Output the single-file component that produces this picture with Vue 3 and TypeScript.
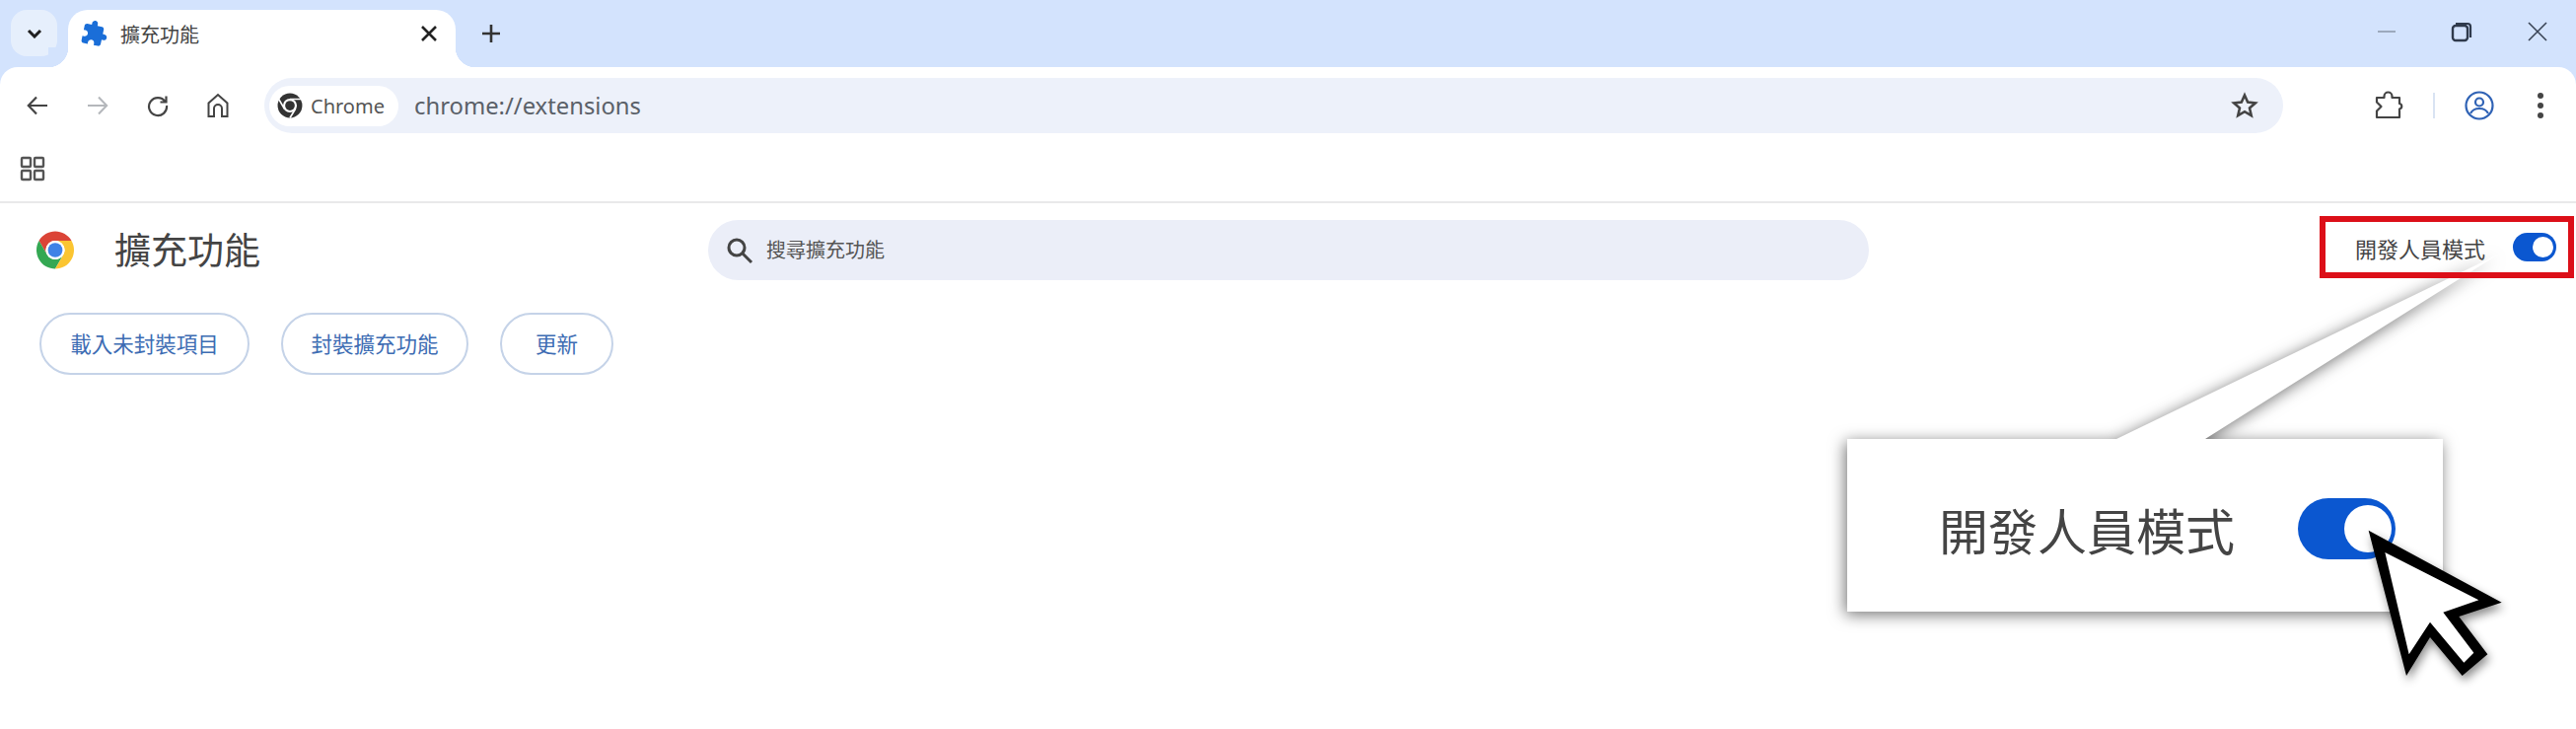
<template>
  <div class="page">
    <!-- browser chrome -->
    <div class="tabstrip">
      <div class="tab-list">
        <svg width="16" height="10" viewBox="0 0 16 10"><path d="M2 2l6 6 6-6" fill="none" stroke="#1f1f1f" stroke-width="3" /></svg>
      </div>
      <div class="tab">
        <svg class="favicon" width="28" height="28" viewBox="0 0 24 24">
          <path :d="puzzle" fill="#1a6ed8" transform="rotate(12 12 12)" />
        </svg>
        <span class="tab-title">擴充功能</span>
        <svg class="tab-close" width="18" height="18" viewBox="0 0 18 18"><path d="M2 2l14 14M16 2L2 16" stroke="#222" stroke-width="2.6" /></svg>
      </div>
      <svg class="tab-new" width="22" height="22" viewBox="0 0 22 22"><path d="M11 2v18M2 11h18" stroke="#333" stroke-width="2.6" /></svg>
      <div class="window-controls">
        <svg width="20" height="20" viewBox="0 0 20 20"><path d="M1 10h18" stroke="#8f9bad" stroke-width="1.6" /></svg>
        <svg width="22" height="22" viewBox="0 0 22 22">
          <rect x="2" y="5" width="15" height="15" rx="3" fill="none" stroke="#2f3a4c" stroke-width="2.4" />
          <path d="M5 3h12a3 3 0 0 1 3 3v11" fill="none" stroke="#2f3a4c" stroke-width="2.2" />
        </svg>
        <svg width="22" height="22" viewBox="0 0 22 22"><path d="M2 2l18 18M20 2L2 20" stroke="#3a4456" stroke-width="1.6" /></svg>
      </div>
    </div>

    <div class="chrome-body">
      <div class="toolbar">
        <div class="nav-icons">
          <svg width="24" height="24" viewBox="0 0 24 24"><path d="M22 12H3M11 3.500L2.800 12l8.200 8.500" fill="none" stroke="#444" stroke-width="2.200" /></svg>
          <svg width="24" height="24" viewBox="0 0 24 24"><path d="M2 12h19M13 3.500l8.200 8.500-8.200 8.500" fill="none" stroke="#b4b7bb" stroke-width="2" /></svg>
          <svg width="24" height="24" viewBox="0 0 24 24"><path d="M19.500 8A9 9 0 1 0 21 12M20.500 2.500V8.500H14.500" fill="none" stroke="#444" stroke-width="2.200" /></svg>
          <svg width="24" height="26" viewBox="0 0 24 26"><path d="M2.500 24V10.500L12 2l9.500 8.500V24h-5.500v-8a4 4 0 0 0-8 0v8z" fill="none" stroke="#444" stroke-width="2" /></svg>
        </div>
        <div class="omnibox">
          <div class="chip">
            <svg width="26" height="26" viewBox="0 0 48 48">
              <circle cx="24" cy="24" r="23" fill="#333" />
              <circle cx="24" cy="24" r="13" fill="#fff" />
              <circle cx="24" cy="24" r="9" fill="#333" />
              <path d="M24 12h21M13.600 30L3 11.800M34.400 30L24 47" stroke="#fff" stroke-width="3" />
            </svg>
            <span class="chip-text">Chrome</span>
          </div>
          <span class="url">chrome://extensions</span>
          <svg class="star" width="28" height="28" viewBox="0 0 24 24">
            <path d="M12 3l2.700 6.100 6.600.7-5 4.400 1.500 6.500L12 17.300l-5.800 3.400 1.500-6.500-5-4.400 6.600-.7z" fill="none" stroke="#444" stroke-width="2.200" stroke-linejoin="miter" />
          </svg>
        </div>
        <div class="tool-icons">
          <svg class="tool-puzzle" width="30" height="30" viewBox="0 0 30 30">
            <path d="M2 7H9.500V5.500a4 4 0 0 1 8 0V7H25V13a2.800 2.800 0 0 1 0 5.500V27H2V20.500L6.500 16 2 11.500z" fill="none" stroke="#444" stroke-width="2.200" stroke-linejoin="round" />
          </svg>
          <span class="tool-sep"></span>
          <svg class="tool-profile" width="30" height="30" viewBox="0 0 30 30">
            <circle cx="15" cy="15" r="13.500" fill="none" stroke="#2f62b5" stroke-width="2.200" />
            <circle cx="15" cy="11.500" r="4" fill="none" stroke="#2f62b5" stroke-width="2.200" />
            <path d="M6 23c2-4 5-5 9-5s7 1 9 5" fill="none" stroke="#2f62b5" stroke-width="2.200" />
          </svg>
          <svg class="tool-menu" width="8" height="28" viewBox="0 0 8 28">
            <circle cx="4" cy="4" r="3" fill="#444" /><circle cx="4" cy="14" r="3" fill="#444" /><circle cx="4" cy="24" r="3" fill="#444" />
          </svg>
        </div>
      </div>

      <div class="bookmarks">
        <svg width="26" height="26" viewBox="0 0 26 26">
          <g fill="none" stroke="#555" stroke-width="2.400">
            <rect x="2" y="2" width="9" height="9" rx="1" /><rect x="15" y="2" width="9" height="9" rx="1" />
            <rect x="2" y="15" width="9" height="9" rx="1" /><rect x="15" y="15" width="9" height="9" rx="1" />
          </g>
        </svg>
      </div>
    </div>

    <!-- extensions page -->
    <div class="ext-header">
      <svg class="logo" width="38" height="39" viewBox="2 2 44 44">
        <path d="M4.950 13A22 22 0 0 1 43.050 13H24A11 11 0 0 0 14.470 29.500z" fill="#db4437" />
        <path d="M4.950 13A22 22 0 0 0 24 46L33.530 29.500A11 11 0 0 1 14.470 29.500z" fill="#34a853" />
        <path d="M43.050 13A22 22 0 0 1 24 46L33.530 29.500A11 11 0 0 0 24 13z" fill="#fbc531" />
        <circle cx="24" cy="24" r="11" fill="#fff" />
        <circle cx="24" cy="24" r="8.500" fill="#3f82e6" />
      </svg>
      <h1 class="title">擴充功能</h1>
      <div class="search">
        <svg width="28" height="28" viewBox="0 0 28 28"><circle cx="11" cy="11" r="8" fill="none" stroke="#444" stroke-width="3" /><path d="M17 17l9 9" stroke="#444" stroke-width="3" /></svg>
        <span class="search-text">搜尋擴充功能</span>
      </div>
      <div class="dev-mode">
        <span class="dev-label">開發人員模式</span>
        <span class="toggle"><span class="knob"></span></span>
      </div>
    </div>

    <div class="actions">
      <button v-for="b in actions" :key="b.label" class="action-btn" :style="{ width: b.width + 'px' }">{{ b.label }}</button>
    </div>

    <!-- zoomed callout -->
    <svg class="callout-bg" width="2612" height="739" viewBox="0 0 2612 739">
      <polygon points="1873,445 2146,445 2533,258 2236,445 2477,445 2477,620 1873,620" fill="#fff" />
    </svg>
    <div class="callout">
      <span class="callout-label">開發人員模式</span>
      <span class="toggle toggle-big"><span class="knob knob-big"></span></span>
    </div>
    <svg class="cursor" width="240" height="210" viewBox="0 0 720 630">
      <polygon points="245,143 650,362 520,405 607,520 530,585 432,468 360,585" fill="#000" />
      <polygon points="295,210 580,355 472,392 565,515 535,545 432,422 368,520" fill="#fff" />
    </svg>
  </div>
</template>

<script setup lang="ts">
const puzzle =
  "M20.500 11H19V7c0-1.100-.9-2-2-2h-4V3.500C13 2.120 11.880 1 10.500 1S8 2.120 8 3.500V5H4c-1.100 0-1.990.9-1.990 2v3.800H3.500c1.490 0 2.700 1.210 2.700 2.700s-1.210 2.700-2.700 2.700H2V20c0 1.100.9 2 2 2h3.800v-1.500c0-1.490 1.210-2.700 2.700-2.700 1.490 0 2.700 1.210 2.700 2.700V22H17c1.100 0 2-.9 2-2v-4h1.500c1.380 0 2.500-1.120 2.500-2.500S21.880 11 20.500 11z";

const actions = [
  { label: "載入未封裝項目", width: 213 },
  { label: "封裝擴充功能", width: 190 },
  { label: "更新", width: 115 },
];
</script>

<style>
html,
body {
  margin: 0;
  background: #fff;
}
</style>

<style scoped>
.page {
  position: relative;
  width: 2612px;
  height: 739px;
  overflow: hidden;
  background: #fff;
  font-family: "Noto Sans CJK TC", "Noto Sans", sans-serif;
  color: #444;
}

.tabstrip {
  display: flex;
  align-items: flex-start;
  height: 58px;
  padding-top: 10px;
  background: #d3e3fd;
}

.tab-list {
  display: flex;
  align-items: center;
  justify-content: center;
  width: 47px;
  height: 47px;
  margin-left: 11px;
  border-radius: 16px;
  background: #e6effc;
}

.tab {
  position: relative;
  display: flex;
  align-items: center;
  box-sizing: border-box;
  width: 393px;
  height: 58px;
  margin-left: 11px;
  padding: 0 18px 10px 13px;
  background: #fff;
  border-radius: 20px 20px 0 0;
}

.tab::before,
.tab::after {
  content: "";
  position: absolute;
  bottom: 0;
  width: 20px;
  height: 20px;
}

.tab::before {
  left: -20px;
  background: radial-gradient(circle at 0 0, #d3e3fd 20px, #fff 20.500px);
}

.tab::after {
  right: -20px;
  background: radial-gradient(circle at 100% 0, #d3e3fd 20px, #fff 20.500px);
}

.tab-title {
  margin-left: 12px;
  font-size: 20px;
  color: #444;
}

.tab-close {
  margin-left: auto;
}

.tab-new {
  margin: 13px 0 0 25px;
}

.window-controls {
  display: flex;
  align-items: center;
  gap: 55px;
  margin: 11px 28px 0 auto;
}

.chrome-body {
  background: #d3e3fd;
}

.toolbar {
  display: flex;
  align-items: center;
  height: 78px;
  background: #fff;
  border-radius: 18px 18px 0 0;
}

.nav-icons {
  display: flex;
  align-items: center;
  gap: 37px;
  width: 268px;
  padding-left: 26px;
  box-sizing: border-box;
}

.omnibox {
  display: flex;
  align-items: center;
  box-sizing: border-box;
  width: 2047px;
  height: 56px;
  padding: 0 25px 0 5px;
  border-radius: 28px;
  background: #edf1fa;
}

.chip {
  display: flex;
  align-items: center;
  box-sizing: border-box;
  width: 131px;
  height: 41px;
  padding-left: 8px;
  border-radius: 21px;
  background: #fff;
}

.chip-text {
  margin-left: 8px;
  font-family: "Noto Sans", sans-serif;
  font-size: 20px;
  color: #555;
}

.url {
  margin-left: 16px;
  font-family: "Noto Sans", sans-serif;
  font-size: 23.800px;
  color: #5a6068;
}

.star {
  margin-left: auto;
}

.tool-icons {
  display: flex;
  align-items: center;
  flex: 1;
}

.tool-puzzle {
  margin-left: 93px;
}

.tool-sep {
  width: 2px;
  height: 26px;
  margin-left: 29px;
  background: #d9e3f3;
}

.tool-profile {
  margin-left: 30px;
}

.tool-menu {
  margin-left: 43px;
}

.bookmarks {
  display: flex;
  align-items: center;
  box-sizing: border-box;
  height: 60px;
  padding: 0 0 8px 20px;
  background: #fff;
  border-bottom: 2px solid #e9e9ea;
}

.ext-header {
  display: flex;
  align-items: flex-start;
  padding: 13px 0 0 37px;
}

.logo {
  margin-top: 15px;
}

.title {
  width: 602px;
  margin: 8px 0 0 41px;
  font-size: 37px;
  font-weight: 400;
  line-height: 50px;
  color: #444;
}

.search {
  display: flex;
  align-items: center;
  box-sizing: border-box;
  width: 1177px;
  height: 61px;
  margin-top: 4px;
  padding-left: 18px;
  border-radius: 31px;
  background: #ebeef8;
}

.search-text {
  margin: 0 0 3px 13px;
  font-size: 20px;
  color: #555;
}

.dev-mode {
  position: relative;
  z-index: 2;
  display: flex;
  align-items: center;
  box-sizing: border-box;
  width: 258px;
  height: 63px;
  margin-left: auto;
  margin-right: 2px;
  padding: 0 12px 0 30px;
  border: 6px solid #dc0f18;
}

.dev-label {
  font-size: 22px;
  color: #444;
}

.toggle {
  position: relative;
  width: 44px;
  height: 29px;
  margin-left: auto;
  border-radius: 15px;
  background: #0b57d0;
}

.knob {
  position: absolute;
  top: 4px;
  right: 3px;
  width: 21px;
  height: 21px;
  border-radius: 50%;
  background: #fff;
}

.actions {
  display: flex;
  gap: 32px;
  margin-top: 33px;
  padding-left: 40px;
}

.action-btn {
  height: 63px;
  padding: 0 0 3px;
  border: 2px solid #c5d3e8;
  border-radius: 32px;
  background: #fff;
  font-family: "Noto Sans CJK TC", sans-serif;
  font-size: 21.500px;
  color: #3d6cb3;
}

.callout-bg {
  position: absolute;
  top: 0;
  left: 0;
  z-index: 1;
  filter: drop-shadow(-2px 3px 8px rgba(0, 0, 0, 0.55));
}

.callout {
  position: absolute;
  top: 445px;
  left: 1873px;
  z-index: 1;
  display: flex;
  align-items: center;
  box-sizing: border-box;
  width: 604px;
  height: 175px;
  padding: 7px 48px 0 93px;
}

.callout-label {
  font-size: 50px;
  color: #444;
}

.toggle-big {
  width: 99px;
  height: 62px;
  border-radius: 31px;
}

.knob-big {
  top: 7px;
  right: 4px;
  width: 48px;
  height: 48px;
}

.cursor {
  position: absolute;
  top: 490px;
  left: 2320px;
  z-index: 3;
  filter: drop-shadow(2px 5px 5px rgba(0, 0, 0, 0.45));
}
</style>
